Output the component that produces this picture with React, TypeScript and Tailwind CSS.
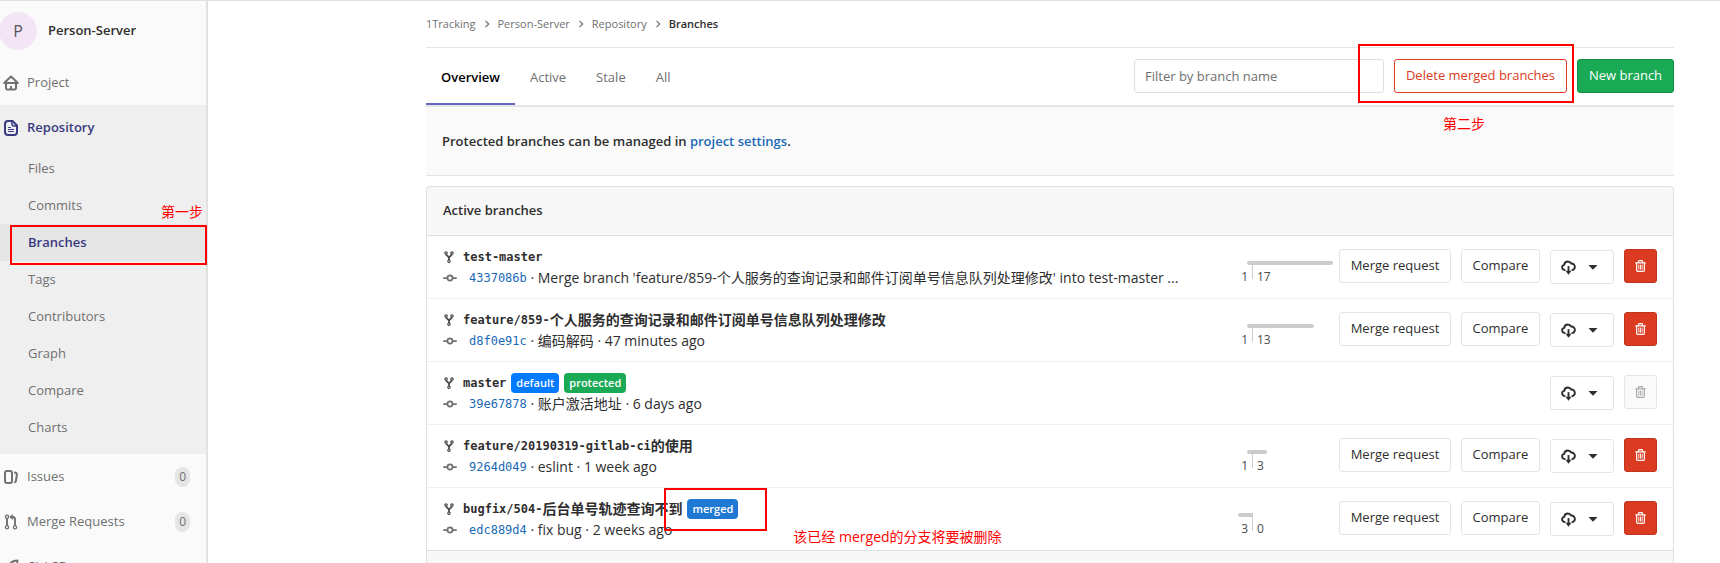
import type { ReactNode } from "react";

type IconProps = { className?: string };

const HomeIcon = ({ className }: IconProps) => (
  <svg viewBox="0 0 16 16" className={className} fill="none" stroke="currentColor" strokeWidth="2" strokeLinecap="round" strokeLinejoin="round" aria-hidden="true">
    <path d="M1.200 8 8 1.600 14.800 8zM3 8v5.200a1.200 1.200 0 0 0 1.200 1.200h7.600a1.200 1.200 0 0 0 1.200-1.200V8" />
    <path d="M8 11.800v2.300" />
  </svg>
);

const DocIcon = ({ className }: IconProps) => (
  <svg viewBox="0 0 16 16" className={className} fill="none" stroke="currentColor" aria-hidden="true">
    <path strokeWidth="2" d="M5 1h4.500L14 5.500V12a3 3 0 0 1-3 3H5a3 3 0 0 1-3-3V4a3 3 0 0 1 3-3z" strokeLinejoin="round" />
    <path strokeWidth="1.500" d="M9 1.500V4a2 2 0 0 0 2 2h2.500" />
    <path strokeWidth="1" strokeLinecap="round" d="M5.500 7.500h2M5.500 9.500h5M5.500 11.500h5" />
  </svg>
);

const IssuesIcon = ({ className }: IconProps) => (
  <svg viewBox="0 0 16 16" className={className} fill="none" stroke="currentColor" strokeWidth="2" aria-hidden="true">
    <rect x="2" y="2" width="7" height="12" rx="2" />
    <path strokeLinecap="round" d="M12 3.500c1.600.4 2 1 1.800 2.500l-.8 5.500c-.1 1-.4 1.500-1 1.700" />
  </svg>
);

const MergeIcon = ({ className }: IconProps) => (
  <svg viewBox="0 0 16 16" className={className} fill="none" stroke="currentColor" aria-hidden="true">
    <g strokeWidth="1.300">
      <circle cx="4" cy="2.800" r="1.600" />
      <circle cx="4" cy="13.200" r="1.600" />
      <circle cx="12" cy="13.200" r="1.600" />
    </g>
    <path strokeWidth="1.900" d="M4 4.500v7M12 11.500V5.500a2.500 2.500 0 0 0-2.500-2.500H8.500" />
    <path fill="currentColor" stroke="none" d="M9.800 0v6L6.300 3z" />
  </svg>
);

const RocketIcon = ({ className }: IconProps) => (
  <svg viewBox="0 0 16 16" className={className} fill="none" stroke="currentColor" strokeWidth="1.800" strokeLinejoin="round" aria-hidden="true">
    <path d="M14.500 1.500c-4 0-6.500 1.500-8.500 4.500H3L1.500 9l3 .5 2 2 .5 3L10 13v-3c3-2 4.500-4.500 4.500-8.500z" />
  </svg>
);

const ForkIcon = ({ className }: IconProps) => (
  <svg viewBox="0 0 12 12" className={className} fill="none" stroke="currentColor" aria-hidden="true">
    <g strokeWidth="1.200">
      <circle cx="3" cy="2" r="1.200" />
      <circle cx="9" cy="2" r="1.200" />
      <circle cx="6" cy="10.200" r="1.200" />
    </g>
    <path strokeWidth="1.800" d="M3.100 3.200C3.300 5.200 6 5 6 7.200M8.900 3.200C8.700 5.200 6 5 6 7.200V9" />
  </svg>
);

const CommitIcon = ({ className }: IconProps) => (
  <svg viewBox="0 0 16 16" className={className} fill="none" stroke="currentColor" strokeWidth="2" strokeLinecap="round" aria-hidden="true">
    <circle cx="8" cy="8" r="2.900" />
    <path d="M1 8h3.500M11.500 8H15" />
  </svg>
);

const CloudIcon = ({ className }: IconProps) => (
  <svg viewBox="0 0 16 16" className={className} fill="none" stroke="currentColor" aria-hidden="true">
    <path strokeWidth="2" strokeLinecap="round" d="M4 10.800C2.300 10.600 1.200 9.300 1.200 7.800c0-1.500 1-2.400 2.200-2.600C3.700 3 5.500 1.600 7.300 1.600c1.600 0 2.900.8 3.600 2.200 2.300-.1 3.900 1.500 3.900 3.500 0 1.900-1 3.200-2.800 3.500" />
    <path strokeWidth="2" d="M8 6.500v6.500" />
    <path fill="currentColor" stroke="none" d="M4.800 11.500h6.400L8 15.600z" />
  </svg>
);

const TrashIcon = ({ className }: IconProps) => (
  <svg viewBox="0 0 12 13" className={className} fill="none" stroke="currentColor" aria-hidden="true">
    <path strokeWidth="1.300" d="M.3 3h11.400M3.800 2.800V1.500c0-.5.3-.8.800-.8h2.800c.5 0 .8.300.8.800v1.300M1.800 3v8.200c0 .7.500 1.200 1.200 1.200h6c.7 0 1.200-.5 1.200-1.200V3" />
    <path strokeWidth="1" d="M4.200 5v5.500M6 5v5.500M7.800 5v5.500" />
  </svg>
);

const Chevron = () => (
  <svg viewBox="0 0 6 8" className="mx-2 h-2 w-1.5" fill="none" stroke="#707070" strokeWidth="1.200" aria-hidden="true">
    <path d="M1.500.800 4.700 4 1.500 7.200" />
  </svg>
);

const subItems = ["Files", "Commits", "Branches", "Tags", "Contributors", "Graph", "Compare", "Charts"];

function NavItem({ icon, label, count, active }: { icon: ReactNode; label: string; count?: number; active?: boolean }) {
  return (
    <a
      href="#"
      className={`flex h-[45px] items-center gap-2 pr-4 pl-[3px] ${active ? "font-semibold text-[#393982]" : "text-[#707070]"}`}
    >
      {icon}
      <span>{label}</span>
      {count !== undefined && (
        <span className="ml-auto rounded-full bg-[#e5e5e5] px-1 text-xs leading-5">{count}</span>
      )}
    </a>
  );
}

function Sidebar() {
  return (
    <aside className="w-52 shrink-0 border-r-2 border-[#e1e1e1] bg-[#fafafa]">
      <a href="#" className="-ml-px flex h-[59px] items-center gap-[11px] font-semibold text-[#2e2e2e]">
        <span className="flex size-[38px] items-center justify-center rounded-full bg-[#f3e5f5] text-base font-normal text-[#555]">P</span>
        Person-Server
      </a>
      <nav>
        <NavItem icon={<HomeIcon className="size-4" />} label="Project" />
        <div className="bg-[#efefef] pb-2">
          <NavItem icon={<DocIcon className="size-4" />} label="Repository" active />
          <ul>
            {subItems.map((item) =>
              item === "Branches" ? (
                <li key={item} className="relative bg-[#e6e6e6]">
                  <a href="#" className="flex h-[37px] items-center pl-7 font-semibold text-[#393982]">{item}</a>
                  <div className="absolute top-px -right-px left-2.5 h-10 border-2 border-[#f00]" />
                  <span className="absolute right-[3px] bottom-full mb-0.5 text-sm text-[#f00]">第一步</span>
                </li>
              ) : (
                <li key={item}>
                  <a href="#" className="flex h-[37px] items-center pl-7 text-[#707070]">{item}</a>
                </li>
              ),
            )}
          </ul>
        </div>
        <NavItem icon={<IssuesIcon className="size-4" />} label="Issues" count={0} />
        <NavItem icon={<MergeIcon className="size-4" />} label="Merge Requests" count={0} />
        <NavItem icon={<RocketIcon className="size-4" />} label="CI / CD" />
      </nav>
    </aside>
  );
}

type Branch = {
  name: string;
  nameSuffix?: string;
  sha: string;
  message: string;
  labels?: { text: string; color: string }[];
  behind?: number;
  ahead?: number;
  behindBar?: number;
  aheadBar?: number;
  isDefault?: boolean;
  marked?: boolean;
};

const branches: Branch[] = [
  { name: "test-master", sha: "4337086b", message: "Merge branch 'feature/859-个人服务的查询记录和邮件订阅单号信息队列处理修改' into test-master ...", behind: 1, ahead: 17, behindBar: 5, aheadBar: 80 },
  { name: "feature/859-", nameSuffix: "个人服务的查询记录和邮件订阅单号信息队列处理修改", sha: "d8f0e91c", message: "编码解码 · 47 minutes ago", behind: 1, ahead: 13, behindBar: 5, aheadBar: 61 },
  {
    name: "master",
    sha: "39e67878",
    message: "账户激活地址 · 6 days ago",
    labels: [
      { text: "default", color: "bg-[#007bff]" },
      { text: "protected", color: "bg-[#1aaa55]" },
    ],
    isDefault: true,
  },
  { name: "feature/20190319-gitlab-ci", nameSuffix: "的使用", sha: "9264d049", message: "eslint · 1 week ago", behind: 1, ahead: 3, behindBar: 5, aheadBar: 14 },
  {
    name: "bugfix/504-",
    nameSuffix: "后台单号轨迹查询不到",
    sha: "edc889d4",
    message: "fix bug · 2 weeks ago",
    labels: [{ text: "merged", color: "bg-[#1f78d1]" }],
    behind: 3,
    ahead: 0,
    behindBar: 14,
    aheadBar: 0,
    marked: true,
  },
];

function Divergence({ branch }: { branch: Branch }) {
  return (
    <div className="mt-3 flex text-xs leading-4 text-[#4c4c4c]">
      <div className="flex w-[30px] flex-col items-end">
        <div className="h-1 rounded-l-full bg-[#ccc]" style={{ width: branch.behindBar }} />
        <span className="mt-1 pr-1">{branch.behind}</span>
      </div>
      <div className="h-[18px] w-px bg-[#ccc]" />
      <div className="w-[86px]">
        <div className="h-1 rounded-r-full bg-[#ccc]" style={{ width: branch.aheadBar }} />
        <span className="mt-1 block pl-1">{branch.ahead}</span>
      </div>
    </div>
  );
}

const buttonBase = "flex h-[34px] items-center rounded-[3px] border";

function BranchRow({ branch }: { branch: Branch }) {
  return (
    <li className="flex h-[63px] items-start border-b border-[#f0f0f0] px-4 pt-[13px] last:border-[#dfdfdf]">
      <div className="min-w-0 flex-1">
        <div className="flex h-4 items-center">
          <ForkIcon className="mr-2 size-3 shrink-0 text-[#4c4c4c]" />
          <a href="#" className="flex h-4 items-center font-['DejaVu_Sans_Mono','Noto_Sans_CJK_SC',monospace] text-xs leading-4 font-bold whitespace-nowrap text-[#2e2e2e]">
            {branch.name}
            {branch.nameSuffix && <span className="text-sm leading-4">{branch.nameSuffix}</span>}
          </a>
          {branch.labels?.map((label) => (
            <span key={label.text} className={`ml-[5px] rounded px-[5px] text-[11px] leading-5 font-semibold text-white ${label.color}`}>
              {label.text}
            </span>
          ))}
          {branch.marked && (
            <span className="relative size-0">
              <span className="absolute -top-[21px] -left-[74px] h-[43px] w-[103px] border-2 border-[#f00]" />
              <span className="absolute top-[18px] left-[55px] text-sm whitespace-nowrap text-[#f00]">该已经 merged的分支将要被删除</span>
            </span>
          )}
        </div>
        <div className="mt-[3px] flex h-5 items-center text-sm">
          <CommitIcon className="mr-3 size-3.5 shrink-0 text-[#707070]" />
          <a href="#" className="font-['DejaVu_Sans_Mono',monospace] text-xs text-[#1b69b6]">{branch.sha}</a>
          <span className="truncate whitespace-pre"> · {branch.message}</span>
        </div>
      </div>
      {!branch.isDefault && <Divergence branch={branch} />}
      <div className="flex items-start gap-2.5">
        {!branch.isDefault && (
          <>
            <a href="#" className={`${buttonBase} w-28 justify-center border-[#e5e5e5]`}>Merge request</a>
            <a href="#" className={`${buttonBase} w-[79px] justify-center border-[#e5e5e5]`}>Compare</a>
          </>
        )}
        <div className="pt-px">
          <button type="button" aria-label="Download" className={`${buttonBase} w-16 gap-3 border-[#e5e5e5] pl-2.5`}>
            <CloudIcon className="size-[15px]" />
            <svg viewBox="0 0 10 5" className="h-[5px] w-2.5" fill="currentColor" aria-hidden="true">
              <path d="M.500 0h9L5 4.800z" />
            </svg>
          </button>
        </div>
        <button
          type="button"
          aria-label="Delete branch"
          disabled={branch.isDefault}
          className={`${buttonBase} w-[33px] justify-center ${branch.isDefault ? "border-[#e5e5e5] bg-[#fafafa] text-[#a8a8a8]" : "border-[#c0341d] bg-[#db3b21] text-white"}`}
        >
          <TrashIcon className="h-3 w-[11px]" />
        </button>
      </div>
    </li>
  );
}

const tabBase = "flex items-center border-b-2 px-[15px] pt-1";

export default function App() {
  return (
    <div className="flex h-screen overflow-hidden border-t border-[#e1e1e1] bg-white font-['Open_Sans','Noto_Sans_CJK_SC',sans-serif] text-[13px] text-[#2e2e2e]">
      <Sidebar />
      <main className="mr-[46px] ml-auto w-full max-w-[1248px]">
        <nav aria-label="Breadcrumb" className="flex h-[47px] items-center border-b border-[#e5e5e5] text-[11px] text-[#707070]">
          <a href="#">1Tracking</a>
          <Chevron />
          <a href="#">Person-Server</a>
          <Chevron />
          <a href="#">Repository</a>
          <Chevron />
          <a href="#" className="font-semibold text-[#2e2e2e]">Branches</a>
        </nav>
        <div className="flex h-[59px] items-start justify-between border-b-2 border-[#e5e5e5]">
          <div className="flex h-full text-[#707070]">
            <a href="#" className={`${tabBase} border-[#6666c4] font-semibold text-black`}>Overview</a>
            <a href="#" className={`${tabBase} border-transparent`}>Active</a>
            <a href="#" className={`${tabBase} border-transparent`}>Stale</a>
            <a href="#" className={`${tabBase} border-transparent`}>All</a>
          </div>
          <div className="relative flex gap-2.5 pt-[11px]">
            <input
              type="search"
              aria-label="Filter by branch name"
              placeholder="Filter by branch name"
              className="h-[34px] w-[250px] rounded-[3px] border border-[#dfdfdf] px-2.5 placeholder:text-[#707070]"
            />
            <a href="#" className={`${buttonBase} w-[173px] justify-center border-[#db3b21] text-[#db3b21]`}>Delete merged branches</a>
            <a href="#" className={`${buttonBase} w-[97px] justify-center border-[#168f48] bg-[#1aaa55] text-white`}>New branch</a>
            <div className="absolute -top-1 right-[100px] h-[59px] w-[216px] border-2 border-[#f00]" />
            <span className="absolute top-[66px] right-[189px] text-sm text-[#f00]">第二步</span>
          </div>
        </div>
        <p className="border-b border-[#e5e5e5] bg-[#fafafa] px-4 py-6 leading-5 font-semibold">
          Protected branches can be managed in <a href="#" className="text-[#1b69b6]">project settings</a>.
        </p>
        <section className="mt-2.5 rounded-[3px] border border-[#dfdfdf] bg-[#f7f7f7] pb-12">
          <h1 className="flex h-[49px] items-center border-b border-[#dfdfdf] px-4 font-semibold">Active branches</h1>
          <ul className="bg-white">
            {branches.map((branch) => (
              <BranchRow key={branch.name} branch={branch} />
            ))}
          </ul>
        </section>
      </main>
    </div>
  );
}
